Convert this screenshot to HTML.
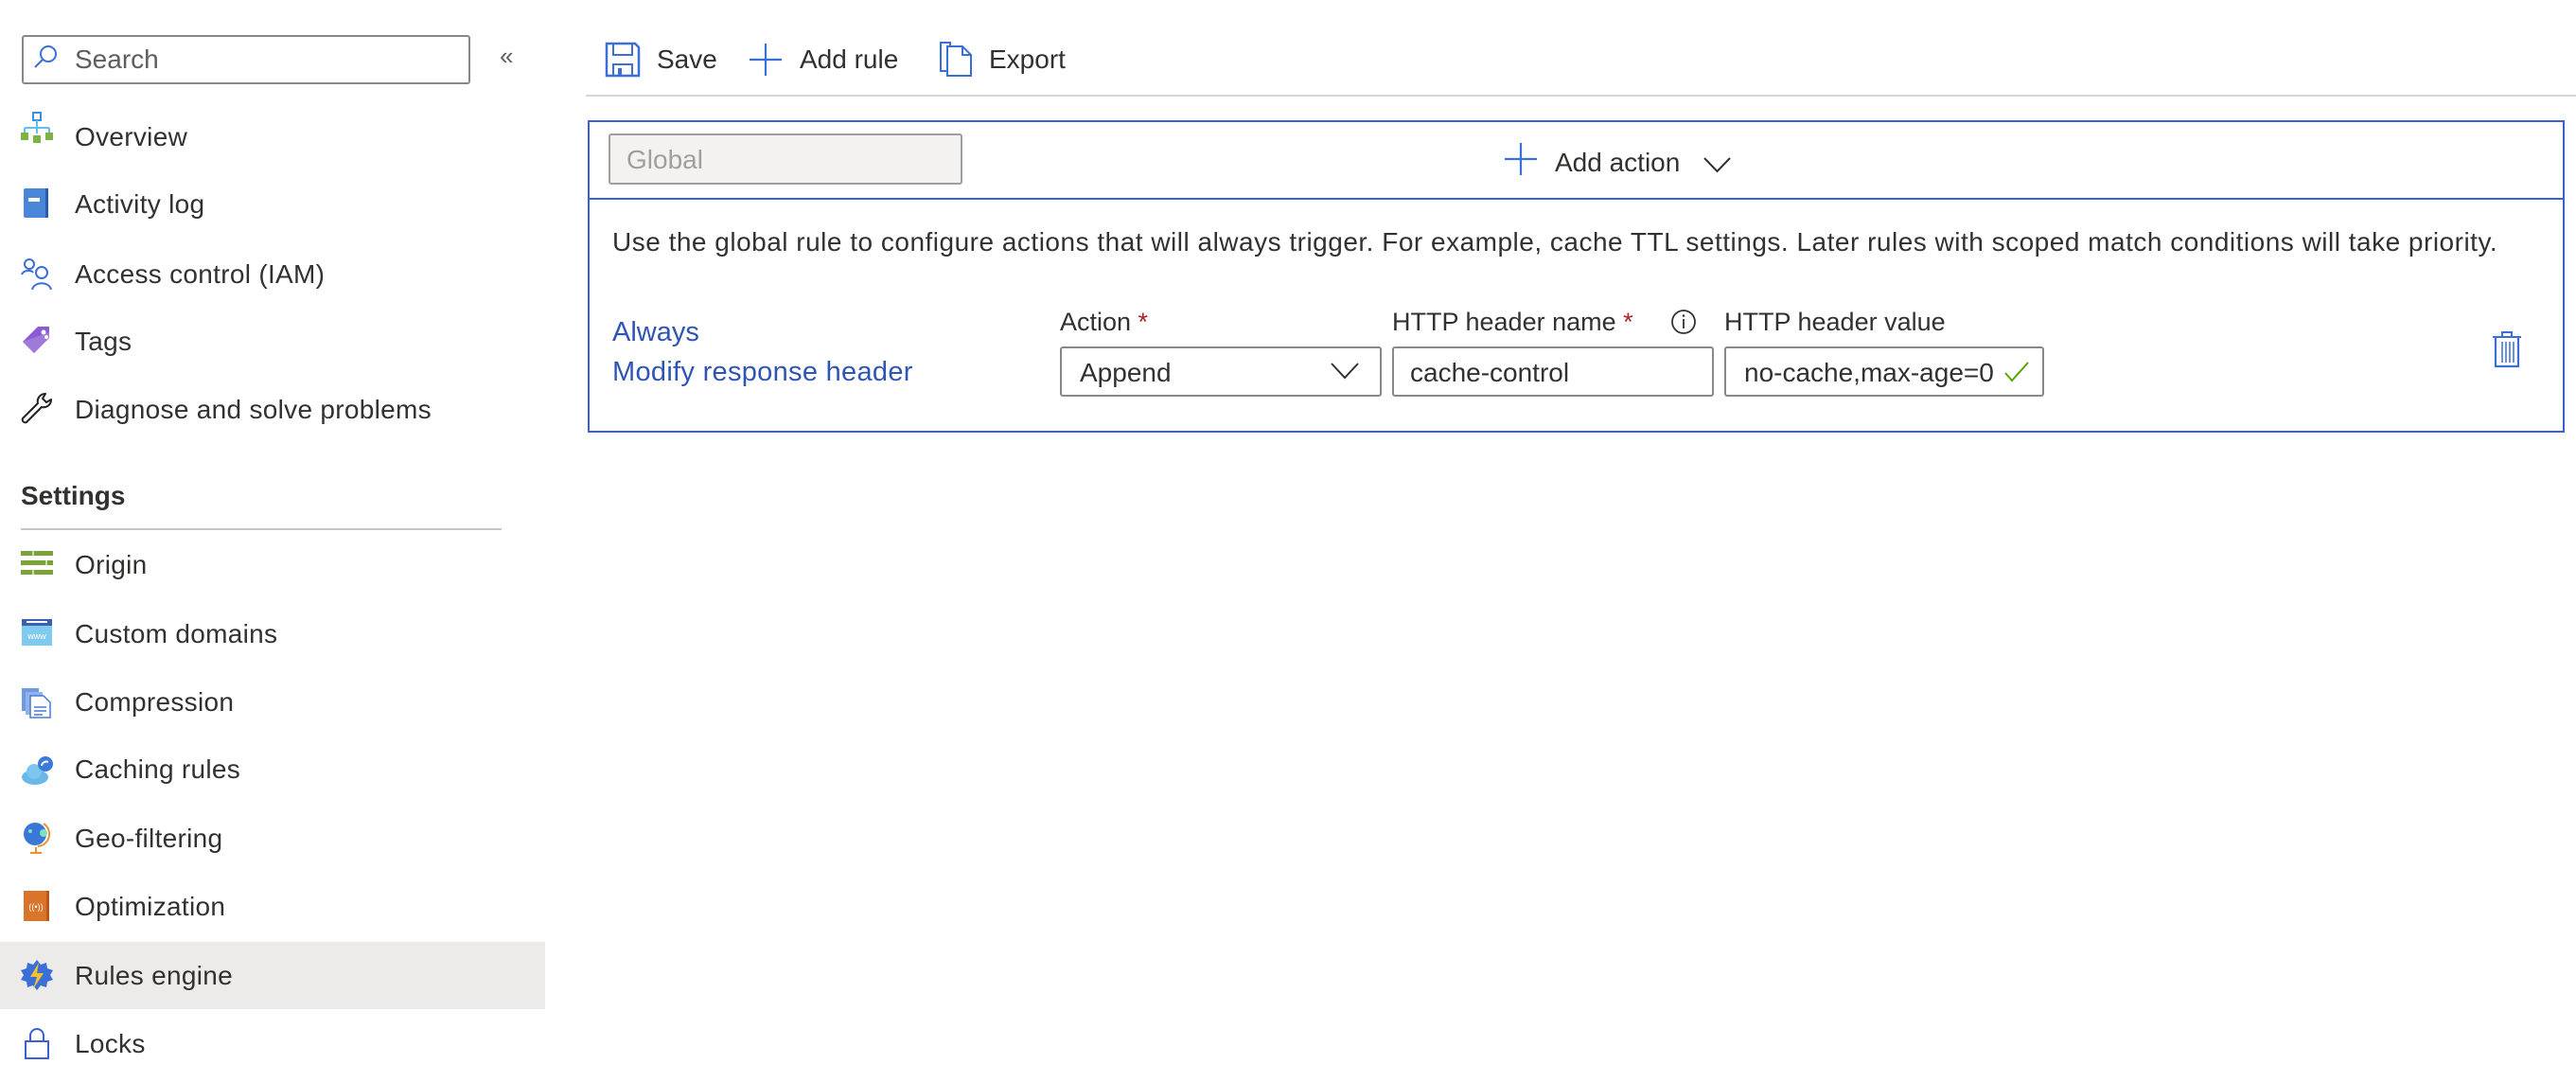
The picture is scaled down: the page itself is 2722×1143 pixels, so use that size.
<!DOCTYPE html>
<html><head><meta charset="utf-8"><style>
*{margin:0;padding:0;box-sizing:border-box}
body{width:2722px;height:1143px;background:#fff;font-family:"Liberation Sans",sans-serif;color:#323130;position:relative;overflow:hidden;font-size:27px}
.a{position:absolute;white-space:nowrap}
.mi{position:absolute;left:79px;font-size:28px;line-height:40px;letter-spacing:0.3px}
.ic{position:absolute;left:22px;width:34px;height:34px}
.box{position:absolute;border:2px solid #8a8886;border-radius:3px;background:#fff}
</style></head><body>
<!-- search -->
<div class="box" style="left:23px;top:37px;width:474px;height:52px;border-width:2px;border-color:#8a8886"></div>
<svg class="a" style="left:34px;top:46px" width="28" height="30" viewBox="0 0 28 30"><circle cx="17" cy="11" r="8" fill="none" stroke="#3a6fd8" stroke-width="2"/><path d="M11 17 L3 25" stroke="#3a6fd8" stroke-width="2"/></svg>
<div class="a" style="left:79px;top:43px;font-size:28px;line-height:40px;color:#605e5c">Search</div>
<div class="a" style="left:528px;top:44px;font-size:26px;color:#605e5c">«</div>

<!-- menu -->
<svg class="ic" style="top:118px" viewBox="0 0 34 34"><rect x="13" y="1" width="8" height="8" fill="#fff" stroke="#3a8fd8" stroke-width="2"/><path d="M17 9v8M4 17h26M4 17v6M17 17v6M30 17v6" stroke="#5ec2f0" stroke-width="2" fill="none"/><rect x="0" y="22" width="8" height="8" fill="#7cb342"/><rect x="13" y="25" width="8" height="8" fill="#7cb342"/><rect x="26" y="22" width="8" height="8" fill="#7cb342"/></svg>
<div class="mi" style="top:125px">Overview</div>
<svg class="ic" style="top:197px" viewBox="0 0 34 34"><rect x="3" y="2" width="26" height="31" rx="2" fill="#4a86d8"/><rect x="26" y="2" width="3" height="31" fill="#2a5db0"/><rect x="8" y="12" width="12" height="4" fill="#fff"/></svg>
<div class="mi" style="top:196px">Activity log</div>
<svg class="ic" style="top:272px" viewBox="0 0 34 34"><circle cx="9" cy="7" r="5" fill="none" stroke="#3a6fd8" stroke-width="2"/><path d="M1 18c2-5 10-5 12-2" fill="none" stroke="#3a6fd8" stroke-width="2"/><circle cx="22" cy="16" r="6" fill="none" stroke="#3a6fd8" stroke-width="2"/><path d="M12 34c2-9 18-9 20 0" fill="none" stroke="#3a6fd8" stroke-width="2"/></svg>
<div class="mi" style="top:270px">Access control (IAM)</div>
<svg class="ic" style="top:343px" viewBox="0 0 34 34"><path d="M2 18 L18 2 L30 2 L30 14 L14 30 Z" fill="#8b5bd6"/><path d="M2 18 L14 30 L30 14 L30 8 Z" fill="#a07ad9"/><circle cx="24" cy="8" r="2.5" fill="#fff"/><circle cx="27" cy="13" r="2" fill="#fff"/></svg>
<div class="mi" style="top:341px">Tags</div>
<svg class="ic" style="top:414px" viewBox="0 0 34 34"><path d="M26 2a8 8 0 0 0-8 10L2 28a3 3 0 0 0 4 4L22 16a8 8 0 0 0 10-8l-5 3-4-4 3-5z" fill="none" stroke="#222" stroke-width="2" stroke-linejoin="round"/></svg>
<div class="mi" style="top:413px">Diagnose and solve problems</div>
<div class="a" style="left:22px;top:504px;font-size:28px;line-height:40px;font-weight:bold;color:#323130">Settings</div>
<div class="a" style="left:22px;top:558px;width:508px;height:2px;background:#c8c6c4"></div>
<svg class="ic" style="top:580px" viewBox="0 0 34 34"><rect x="0" y="2" width="34" height="5" fill="#7aa43a"/><rect x="0" y="12" width="34" height="5" fill="#7aa43a"/><rect x="0" y="22" width="34" height="5" fill="#7aa43a"/><rect x="12" y="2" width="2" height="5" fill="#c8dca8"/><rect x="26" y="12" width="2" height="5" fill="#c8dca8"/><rect x="12" y="22" width="2" height="5" fill="#c8dca8"/></svg>
<div class="mi" style="top:577px">Origin</div>
<svg class="ic" style="top:653px" viewBox="0 0 34 34"><rect x="1" y="1" width="32" height="28" fill="#7fcbef"/><rect x="1" y="1" width="32" height="7" fill="#3a5fb0"/><rect x="6" y="3" width="22" height="2" fill="#fff"/><text x="17" y="22" font-size="9" fill="#fff" text-anchor="middle" font-family="Liberation Sans">www</text></svg>
<div class="mi" style="top:650px">Custom domains</div>
<svg class="ic" style="top:725px" viewBox="0 0 34 34"><rect x="1" y="2" width="18" height="24" fill="#6e9be0"/><rect x="5" y="6" width="18" height="24" fill="#8fb3ea"/><path d="M10 10h14l7 7v16H10z" fill="#fff" stroke="#4a7ad8" stroke-width="1.5"/><path d="M14 22h13M14 26h13M14 30h9" stroke="#4a7ad8" stroke-width="1.5"/></svg>
<div class="mi" style="top:722px">Compression</div>
<svg class="ic" style="top:796px" viewBox="0 0 34 34"><ellipse cx="15" cy="25" rx="14" ry="8" fill="#69b8e8"/><circle cx="14" cy="19" r="8" fill="#7cc6f0"/><circle cx="26" cy="11" r="8" fill="#3a7ad8"/><path d="M22 13a5 5 0 0 1 7-4" fill="none" stroke="#fff" stroke-width="2"/></svg>
<div class="mi" style="top:793px">Caching rules</div>
<svg class="ic" style="top:868px" viewBox="0 0 34 34"><circle cx="15" cy="13" r="12" fill="#3a78d8"/><circle cx="24" cy="12" r="4" fill="#7de0c0"/><circle cx="10" cy="10" r="2" fill="#7de0c0"/><path d="M24 2a13 13 0 0 1-6 24" fill="none" stroke="#e8912f" stroke-width="2"/><path d="M16 27v5M10 33h12" stroke="#e8912f" stroke-width="2"/></svg>
<div class="mi" style="top:866px">Geo-filtering</div>
<svg class="ic" style="top:940px" viewBox="0 0 34 34"><rect x="3" y="1" width="27" height="32" fill="#d9742a"/><rect x="27" y="1" width="3" height="32" fill="#b85a15"/><text x="16" y="21" font-size="9" fill="#fff" text-anchor="middle" font-family="Liberation Sans">((•))</text></svg>
<div class="mi" style="top:938px">Optimization</div>
<div class="a" style="left:0;top:995px;width:576px;height:71px;background:#edebe9"></div>
<svg class="ic" style="top:1013px" viewBox="0 0 34 34"><path d="M17 1l4 5 6-2 1 6 6 2-3 5 3 5-6 2-1 6-6-2-4 5-4-5-6 2-1-6-6-2 3-5-3-5 6-2 1-6 6 2z" fill="#3a6fd8"/><path d="M19 4l-9 15h7l-4 13 11-17h-7z" fill="#f2c12e"/></svg>
<div class="mi" style="top:1011px">Rules engine</div>
<svg class="ic" style="top:1085px" viewBox="0 0 34 34"><path d="M10 15V9a7 7 0 0 1 14 0v6" fill="none" stroke="#3a5fd8" stroke-width="2"/><rect x="5" y="15" width="24" height="18" fill="#fff" stroke="#3a5fd8" stroke-width="2"/></svg>
<div class="mi" style="top:1083px">Locks</div>

<!-- toolbar -->
<svg class="a" style="left:639px;top:44px" width="38" height="38" viewBox="0 0 38 38"><path d="M2 2h30l4 4v30H2z" fill="#fff" stroke="#3a6fd8" stroke-width="2.5"/><rect x="9" y="2" width="20" height="12" fill="none" stroke="#3a6fd8" stroke-width="2"/><rect x="9" y="24" width="20" height="12" fill="none" stroke="#3a6fd8" stroke-width="2"/><rect x="14" y="28" width="4" height="8" fill="#3a6fd8"/></svg>
<div class="a" style="left:694px;top:43px;font-size:28px;line-height:40px">Save</div>
<svg class="a" style="left:790px;top:44px" width="38" height="38"><path d="M19 2v34M2 19h34" stroke="#3a6fd8" stroke-width="2.2"/></svg>
<div class="a" style="left:845px;top:43px;font-size:28px;line-height:40px">Add rule</div>
<svg class="a" style="left:991px;top:42px" width="40" height="40" viewBox="0 0 40 40"><path d="M3 3h10v30H3z" fill="#fff" stroke="#3a6fd8" stroke-width="2"/><path d="M10 7h16l9 9v22H10z" fill="#fff" stroke="#3a6fd8" stroke-width="2"/><path d="M26 7v9h9" fill="none" stroke="#3a6fd8" stroke-width="2"/></svg>
<div class="a" style="left:1045px;top:43px;font-size:28px;line-height:40px">Export</div>
<div class="a" style="left:619px;top:100px;width:2103px;height:2px;background:#d6d6d6"></div>

<!-- rule box -->
<div class="a" style="left:621px;top:127px;width:2089px;height:330px;border:2px solid #3b5fd6"></div>
<div class="a" style="left:621px;top:209px;width:2089px;height:2px;background:#3b5fd6"></div>
<div class="box" style="left:643px;top:141px;width:374px;height:54px;background:#f3f2f1;border-color:#a19f9d"></div>
<div class="a" style="left:662px;top:149px;font-size:28px;line-height:40px;color:#a19f9d">Global</div>
<svg class="a" style="left:1590px;top:151px" width="36" height="34"><path d="M17 0v34M0 17h34" stroke="#3a6fd8" stroke-width="2.2"/></svg>
<div class="a" style="left:1643px;top:152px;font-size:28px;line-height:40px">Add action</div>
<svg class="a" style="left:1800px;top:166px" width="30" height="17"><path d="M1 1l13.5 14L28 1" fill="none" stroke="#323130" stroke-width="2"/></svg>

<div class="a" style="left:647px;top:236px;font-size:28px;line-height:40px;letter-spacing:0.5px">Use the global rule to configure actions that will always trigger. For example, cache TTL settings. Later rules with scoped match conditions will take priority.</div>
<div class="a" style="left:647px;top:331px;font-size:29px;line-height:40px;color:#2f55b4">Always</div>
<div class="a" style="left:647px;top:373px;font-size:29px;line-height:40px;color:#2f55b4;letter-spacing:0.3px">Modify response header</div>

<div class="a" style="left:1120px;top:320px;font-size:27px;line-height:40px">Action <span style="color:#a4262c">*</span></div>
<div class="box" style="left:1120px;top:366px;width:340px;height:53px"></div>
<div class="a" style="left:1141px;top:374px;font-size:28px;line-height:40px">Append</div>
<svg class="a" style="left:1406px;top:382px" width="30" height="20"><path d="M1 2l14 15L29 2" fill="none" stroke="#323130" stroke-width="2"/></svg>

<div class="a" style="left:1471px;top:320px;font-size:27px;line-height:40px">HTTP header name <span style="color:#a4262c">*</span></div>
<svg class="a" style="left:1764px;top:325px" width="30" height="30"><circle cx="15" cy="15" r="12" fill="none" stroke="#323130" stroke-width="1.8"/><path d="M15 12v10" stroke="#323130" stroke-width="1.8"/><circle cx="15" cy="8.5" r="1.3" fill="#323130"/></svg>
<div class="box" style="left:1471px;top:366px;width:340px;height:53px"></div>
<div class="a" style="left:1490px;top:374px;font-size:28px;line-height:40px">cache-control</div>

<div class="a" style="left:1822px;top:320px;font-size:27px;line-height:40px">HTTP header value</div>
<div class="box" style="left:1822px;top:366px;width:338px;height:53px"></div>
<div class="a" style="left:1843px;top:374px;font-size:28px;line-height:40px">no-cache,max-age=0</div>
<svg class="a" style="left:2117px;top:381px" width="28" height="24"><path d="M2 13l7 8L26 2" fill="none" stroke="#57a300" stroke-width="2"/></svg>

<svg class="a" style="left:2632px;top:349px" width="34" height="40" viewBox="0 0 34 40"><path d="M2 7h30M12 7V2h10v5" fill="none" stroke="#3a6fd8" stroke-width="2"/><path d="M5 7v31h24V7" fill="none" stroke="#3a6fd8" stroke-width="2.2"/><path d="M12 12v22M16 12v22M20 12v22M24 12v22" stroke="#3a6fd8" stroke-width="1.5"/></svg>
</body></html>
